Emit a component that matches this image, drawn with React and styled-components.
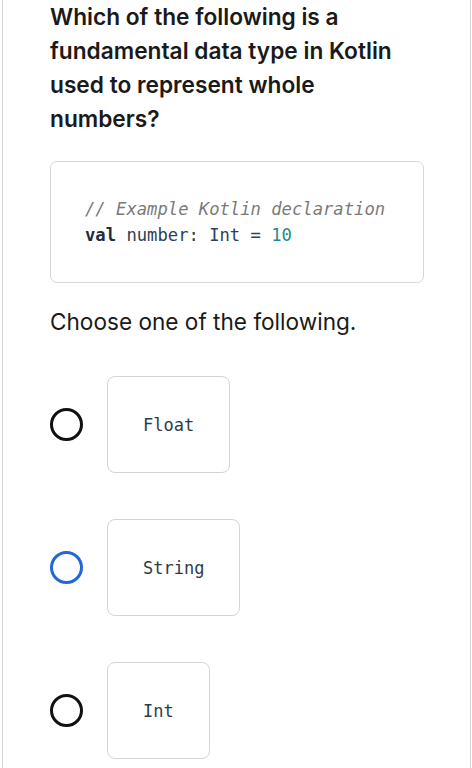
import React from 'react';
import styled, { createGlobalStyle } from 'styled-components';

const GlobalStyle = createGlobalStyle`
  body {
    margin: 0;
    background: #ffffff;
    font-family: Inter, "Noto Sans", sans-serif;
  }
`;

const options = ['Float', 'String', 'Int'];

const App = () => {
  return (
    <>
      <GlobalStyle />
      <Page>
        <Question>
          Which of the following is a fundamental data type in Kotlin used to represent whole numbers?
        </Question>
        <CodeBox>
          <CodeLine><Comment>// Example Kotlin declaration</Comment></CodeLine>
          <CodeLine>
            <Keyword>val</Keyword> number: Int = <Num>10</Num>
          </CodeLine>
        </CodeBox>
        <Prompt>Choose one of the following.</Prompt>
        <OptionList>
          {options.map((opt, i) => (
            <OptionRow key={opt}>
              <Radio $focused={i === 1} />
              <OptionCard>{opt}</OptionCard>
            </OptionRow>
          ))}
        </OptionList>
      </Page>
    </>
  );
};

const Page = styled.div`
  margin: 0 1px 0 2px;
  min-height: 768px;
  border-left: 1px solid #d4d4d4;
  border-right: 1px solid #d4d4d4;
  padding: 0 47px 0 47px;
  box-sizing: border-box;
  overflow: hidden;
`;

const Question = styled.h1`
  margin: 0;
  font-size: 22.7px;
  font-weight: 600;
  line-height: 34px;
  color: #1a1a1a;
  max-width: 360px;
`;

const CodeBox = styled.div`
  margin-top: 25px;
  width: 374px;
  height: 122px;
  box-sizing: border-box;
  border: 1px solid #d6d6d6;
  border-radius: 7px;
  padding: 34px 0 0 34px;
  font-family: "DejaVu Sans Mono", "Liberation Mono", monospace;
  font-size: 17.2px;
  color: #2f4050;
`;

const CodeLine = styled.div`
  line-height: 26px;
  white-space: pre;
`;

const Comment = styled.span`
  color: #7a7a7a;
  font-style: italic;
`;

const Keyword = styled.span`
  font-weight: bold;
  color: #1f2d3d;
`;

const Num = styled.span`
  color: #2a8a8a;
`;

const Prompt = styled.p`
  margin: 24px 0 0;
  font-size: 22.6px;
  line-height: 30px;
  color: #1a1a1a;
`;

const OptionList = styled.div`
  margin-top: 39px;
  display: flex;
  flex-direction: column;
  gap: 46px;
`;

const OptionRow = styled.div`
  display: flex;
  align-items: center;
`;

const Radio = styled.span`
  width: 27px;
  height: 27px;
  border-radius: 50%;
  border: 3px solid ${p => (p.$focused ? '#2366d8' : '#111111')};
  margin-left: 0;
  margin-right: 24px;
  flex-shrink: 0;
`;

const OptionCard = styled.div`
  height: 97px;
  box-sizing: border-box;
  padding: 0 35px;
  display: flex;
  align-items: center;
  border: 1px solid #d4d4d4;
  border-radius: 8px;
  font-family: "DejaVu Sans Mono", "Liberation Mono", monospace;
  font-size: 17px;
  color: #2f3b48;
`;

export default App;
